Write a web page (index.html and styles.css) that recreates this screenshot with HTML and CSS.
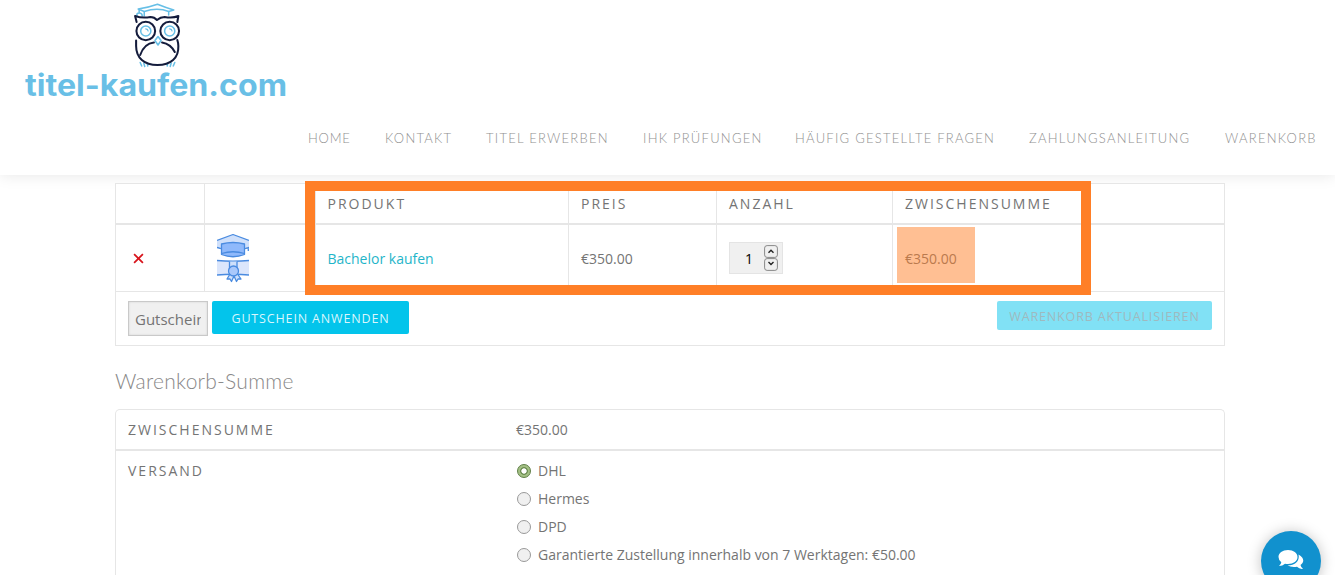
FILE: index.html
```html
<!DOCTYPE html>
<html lang="de">
<head>
<meta charset="utf-8">
<title>Warenkorb – titel-kaufen.com</title>
<link rel="stylesheet" href="styles.css">
</head>
<body>
<header class="site-header">
  <a class="logo">
    <svg class="owl" width="57" height="66" viewBox="0 0 56 66" preserveAspectRatio="none" fill="none" stroke-linecap="round" stroke-linejoin="round">
      <g stroke="#67bfe6" stroke-width="1.5">
        <path d="M8 6 Q17 5 27 1.300 Q36 5 43 7 L38 8.500 Q27 4 14 8.500 Z"/>
        <path d="M14 9 V13 M38 8.500 V12"/>
        <path d="M9 7 V10 M7 13 Q6 10 9 10 Q12 10 12 13"/>
        <circle cx="15.500" cy="28" r="5"/><circle cx="39" cy="28" r="5"/>
        <path d="M15.500 25.800 A2.500 2.500 0 0 1 17.800 28 M39 25.800 A2.500 2.500 0 0 1 41.300 28" stroke-width="1.200"/>
        <path d="M27.500 33.500 L30.500 37.500 L27.500 42 L24.500 37.500 Z"/>
        <path d="M10 59.500 L11.500 63 M13.500 60 L14.500 63.500 M17 61 L17.500 63 M37 61 L36.500 63 M40.500 60 L39.500 63.500 M44 59.500 L42.500 63"/>
      </g>
      <g stroke="#141c3c" stroke-width="2">
        <path d="M6.500 19 L5 13 Q12 15.500 20 14 Q24 14 26.500 17 Q30 14 34 14 Q42 15.500 47.500 13 L46.500 19"/>
        <circle cx="15.500" cy="28" r="9.200"/><circle cx="39" cy="28" r="9.200"/>
        <path d="M6 37.500 V43 C6 55 14 62 27 62 C40 62 48 55 47.500 43 Q47.500 40 46.500 37"/>
        <path d="M10 52 Q14 40.500 23.500 39.500 M31.500 39.500 Q40 41 44 49"/>
      </g>
    </svg>
    <svg class="wordmark" width="264" height="36" viewBox="0 0 264 36"><text x="0" y="28" textLength="262" lengthAdjust="spacingAndGlyphs">titel-kaufen.com</text></svg>
  </a>
  <nav class="nav">
    <a>HOME</a><a>KONTAKT</a><a>TITEL ERWERBEN</a><a>IHK PRÜFUNGEN</a><a>HÄUFIG GESTELLTE FRAGEN</a><a>ZAHLUNGSANLEITUNG</a><a>WARENKORB</a>
  </nav>
</header>

<main class="content">
  <section class="cart">
    <div class="row head">
      <div></div><div></div><div>PRODUKT</div><div>PREIS</div><div>ANZAHL</div><div>ZWISCHENSUMME</div>
    </div>
    <div class="row item">
      <div><svg class="remove" width="11" height="11" viewBox="0 0 10 10"><path d="M1 1 L9 9 M9 1 L1 9" stroke="#d8141c" stroke-width="1.600"/></svg></div>
      <div>
        <svg class="thumb" width="32" height="50" viewBox="0 0 32 50" fill="none" stroke="#4a8be0" stroke-width="1.300" stroke-linejoin="round">
          <path d="M0 7.500 L16 1.500 L32 7.500 V14 H0 Z" fill="#cfe0fb" stroke="none"/>
          <path d="M0 7.500 L16 1.500 L32 7.500 M0 14.500 L4 15.500 M28 15.500 L32 14.500 M31.300 14 V18"/>
          <path d="M4.500 11 Q16 8 27.500 11 V21.500 Q16 26 4.500 21.500 Z" fill="#8fb9fb"/>
          <path d="M4.500 20.500 Q16 17 27.500 20.500"/>
          <path d="M0 27.500 Q16 29 32 27.500 V42 Q16 40.500 0 42 Z" fill="#dbe6fc" stroke="none"/>
          <path d="M0 27.500 Q16 29 32 27.500 M0 42 Q16 40.500 32 42"/>
          <path d="M12.500 28.500 V35 H20 V28.500" fill="#cfe0fb"/>
          <path d="M13 41 L10 46 L13 46 L14.500 48.500 L17 43 L19.500 48.500 L21 46 L24 46 L20.500 41" fill="#cfe0fb"/>
          <circle cx="16.500" cy="38" r="5" fill="#a9c8fb"/>
        </svg>
      </div>
      <div class="text"><a class="product">Bachelor kaufen</a></div>
      <div class="text">€350.00</div>
      <div>
        <span class="qty"><span class="count">1</span>
          <span class="spin">
            <svg width="14" height="13" viewBox="0 0 14 13"><rect x=".6" y=".6" width="12.800" height="11.800" rx="2.500"/><path d="M4.500 7.800 L7 5.300 L9.500 7.800"/></svg>
            <svg width="14" height="13" viewBox="0 0 14 13"><rect x=".6" y=".6" width="12.800" height="11.800" rx="2.500"/><path d="M4.500 4 L7 6.500 L9.500 4"/></svg>
          </span>
        </span>
      </div>
      <div class="text">€350.00</div>
    </div>
    <div class="actions">
      <div class="coupon"><span>Gutschein</span></div>
      <button class="btn apply">GUTSCHEIN ANWENDEN</button>
      <button class="btn update">WARENKORB AKTUALISIEREN</button>
    </div>
    <div class="marker"></div>
    <div class="highlight"></div>
  </section>

  <h2 class="title">Warenkorb-Summe</h2>

  <section class="totals">
    <div class="total-row sub"><div class="label">ZWISCHENSUMME</div><div>€350.00</div></div>
    <div class="total-row">
      <div class="label">VERSAND</div>
      <div class="options">
        <label><i class="radio on"></i>DHL</label>
        <label><i class="radio"></i>Hermes</label>
        <label><i class="radio"></i>DPD</label>
        <label><i class="radio"></i>Garantierte Zustellung innerhalb von 7 Werktagen: €50.00</label>
      </div>
    </div>
  </section>
</main>

<div class="chat">
  <svg width="26" height="22" viewBox="0 0 26 22" fill="#fff">
    <path d="M20.500 5.500 C27 9 26 14 22.500 16 Q23 18.500 25 19.800 Q21.500 20.300 19 17.800 Q13 18.800 9.500 16.300 C17 16.500 22 12 20.500 5.500 Z"/>
    <path d="M10 1 C15.500 1 19.500 4 19.500 8 C19.500 12 15.500 15 10 15 Q8.500 15 7 14.700 Q4.500 17 1 17 Q3 15.500 3.300 13.200 Q.5 11 .5 8 C.5 4 4.500 1 10 1 Z"/>
  </svg>
</div>
</body>
</html>
```

FILE: styles.css
```css
* { box-sizing: border-box; }
body {
  margin: 0;
  width: 1335px;
  height: 575px;
  overflow: hidden;
  position: relative;
  background: #fff;
  color: #747474;
  font: 14px/20px "Open Sans", sans-serif;
}
.site-header {
  height: 175px;
  background: #fff;
  box-shadow: 0 0 15px rgba(0, 0, 0, .1);
}
.logo {
  display: flex;
  flex-direction: column;
  width: 262px;
  margin-left: 25px;
  padding-top: 3px;
  height: 127px;
}
.owl { margin-left: 105px; flex: none; }
.wordmark { margin-top: -1px; overflow: visible; flex: none; }
.wordmark text {
  font: 700 30px Inter, sans-serif;
  fill: #69bfe6;
}
.nav {
  display: grid;
  grid-template-columns: 77px 101px 157px 152px 234px 196px 110px;
  margin-left: 308px;
  padding-top: 1px;
  font: 300 13px/20px Lato, sans-serif;
  letter-spacing: 1.25px;
  color: #909090;
  white-space: nowrap;
}
.nav a:first-child { letter-spacing: .8px; }
.content {
  width: 1110px;
  margin: 8px 0 0 115px;
}
.cart {
  position: relative;
  height: 163px;
  border: 1px solid #e6e6e6;
  background: #fff;
}
.row {
  display: grid;
  grid-template-columns: 88px 111px 253px 148px 176px 332px;
}
.row > div {
  display: flex;
  align-items: center;
  padding-left: 12px;
  border-left: 1px solid #e6e6e6;
}
.row > div:nth-child(3) { padding-left: 11.5px; }
.row > div:first-child { border-left: 0; }
.head { height: 41px; border-bottom: 2px solid #e6e6e6; letter-spacing: 2px; }
.item { height: 66px; }
.item > .text { padding-top: 2px; }
.remove { margin-left: 5px; }
.product { color: #1fb5c9; }
.qty {
  display: flex;
  align-items: center;
  width: 54px;
  height: 32px;
  padding-left: 15px;
  background: #f0f0f0;
  border: 1px solid #e4e4e4;
  color: #000;
}
.count { padding-top: 2px; }
.spin { display: flex; flex-direction: column; margin-left: 11px; }
.spin svg { display: block; fill: #f0f0f0; stroke: #888; }
.spin path { fill: none; stroke: #222; stroke-width: 1.4; }
.actions {
  height: 55px;
  display: flex;
  align-items: flex-start;
  padding: 9px 12px 0;
  border-top: 1px solid #e6e6e6;
}
.coupon {
  width: 80px;
  height: 35px;
  margin-right: 4px;
  padding: 0 6px;
  border: 1px solid #c9c9c9;
  box-shadow: inset 0 0 2px #ccc;
  background: #f0f0f0;
  font-size: 15px;
  line-height: 35px;
}
.coupon span { display: block; overflow: hidden; }
.btn {
  border: 0;
  padding: 2px 0 0;
  border-radius: 2px;
  font: 12.5px/20px "Open Sans", sans-serif;
  letter-spacing: .85px;
  white-space: nowrap;
}
.apply { width: 197px; height: 33px; background: #03c4eb; color: #d9f6fd; }
.update { width: 215px; height: 29px; margin-left: auto; background: #81e1f5; color: #9fb9bf; }
.marker {
  position: absolute;
  left: 189px;
  top: -3px;
  width: 786px;
  height: 114px;
  border: 10px solid #ff7f27;
}
.highlight {
  position: absolute;
  left: 781px;
  top: 43px;
  width: 78px;
  height: 56px;
  background: rgba(255, 127, 39, .5);
}
.title {
  margin: 22px 0 15px;
  font: 300 21px/26px Lato, sans-serif;
  letter-spacing: .25px;
  color: #888;
}
.totals {
  height: 166px;
  border: 1px solid #e6e6e6;
  border-bottom: 0;
  border-radius: 5px 5px 0 0;
}
.total-row { display: grid; grid-template-columns: 388px 1fr; padding: 10px 12px 0; }
.sub { height: 41px; border-bottom: 2px solid #e6e6e6; }
.label { letter-spacing: 2px; }
.options label { display: flex; align-items: center; height: 20px; margin-bottom: 8px; }
.options label:last-child { margin-bottom: 0; }
.radio {
  width: 14px;
  height: 14px;
  margin: 0 7px 0 1px;
  border: 1px solid #999;
  border-radius: 50%;
  background: #f0f0f0;
}
.radio.on {
  border-color: #5e7e45;
  background: radial-gradient(circle, #fff 0 2.3px, #6c8c52 3px 3.5px, #a3c084 4.3px);
}
.chat {
  position: absolute;
  left: 1261px;
  top: 531px;
  width: 60px;
  height: 60px;
  padding: 18px 0 0 17px;
  border-radius: 50%;
  background: #1191ce;
  box-shadow: 0 1px 14px rgba(0, 0, 0, .25);
}
```
